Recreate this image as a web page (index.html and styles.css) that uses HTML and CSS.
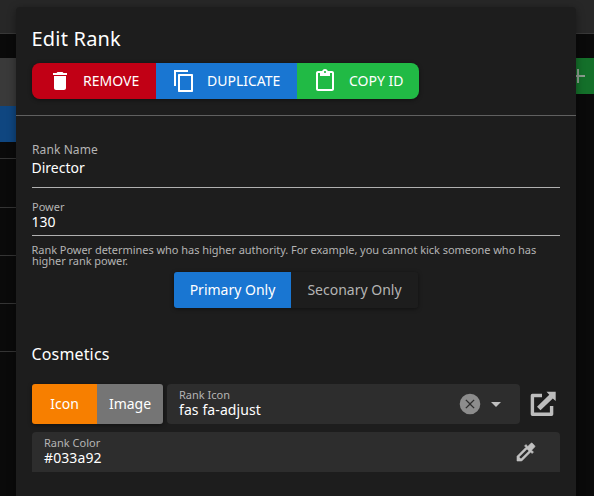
FILE: index.html
```html
<!DOCTYPE html>
<html lang="en">
<head>
<meta charset="utf-8">
<title>Edit Rank</title>
<link rel="stylesheet" href="styles.css">
</head>
<body>
<div class="page">
  <header class="topbar"></header>
  <div class="toolbar">
    <div class="side">
      <div class="side-head"></div>
      <div class="side-active"></div>
      <div class="side-row first"></div>
      <div class="side-row second"></div>
      <div class="side-row"></div>
      <div class="side-row"></div>
      <div class="side-row"></div>
    </div>
    <div class="add"><svg width="24" height="24" viewBox="0 0 24 24"><path d="M19 13h-6v6h-2v-6H5v-2h6V5h2v6h6z"/></svg></div>
  </div>
</div>

<main class="dialog">
  <section class="head">
    <h1>Edit Rank</h1>
    <div class="group actions">
      <button class="btn remove"><svg width="24" height="24" viewBox="0 0 24 24"><path d="M6 19c0 1.100.9 2 2 2h8c1.100 0 2-.9 2-2V7H6v12zM19 4h-3.500l-1-1h-5l-1 1H5v2h14V4z"/></svg><span>REMOVE</span></button>
      <button class="btn duplicate"><svg width="24" height="24" viewBox="0 0 24 24"><path d="M16 1H2v16h2V3h12V1zm3 4H7c-.6 0-1 .4-1 1v16c0 .6.4 1 1 1h13c.6 0 1-.4 1-1V6c0-.6-.4-1-1-1zm0 16H8V7h11v14z"/></svg><span>DUPLICATE</span></button>
      <button class="btn copy"><svg width="24" height="24" viewBox="0 0 24 24"><path d="M19 2h-4.180C14.400.84 13.300 0 12 0S9.600.84 9.180 2H5c-1.100 0-2 .9-2 2v16c0 1.100.9 2 2 2h14c1.100 0 2-.9 2-2V4c0-1.100-.9-2-2-2zm-7 0c.55 0 1 .45 1 1s-.45 1-1 1-1-.45-1-1 .45-1 1-1zm7 18H5V4h2v3h10V4h2v16z"/></svg><span>COPY ID</span></button>
    </div>
  </section>
  <section class="body">
    <div class="field name"><label>Rank Name</label><div class="value">Director</div></div>
    <div class="field power"><label>Power</label><div class="value">130</div></div>
    <p class="hint">Rank Power determines who has higher authority. For example, you cannot kick someone who has higher rank power.</p>
    <div class="group scope">
      <button class="btn primary">Primary Only</button>
      <button class="btn secondary">Seconary Only</button>
    </div>
    <h2>Cosmetics</h2>
    <div class="icon-row">
      <div class="group kind">
        <button class="btn icon-btn">Icon</button>
        <button class="btn image-btn">Image</button>
      </div>
      <div class="box select">
        <div class="text"><label>Rank Icon</label><div class="value">fas fa-adjust</div></div>
        <svg class="clear" width="24" height="24" viewBox="0 0 24 24"><path d="M12 1.700a10.300 10.300 0 1 0 0 20.600 10.300 10.300 0 0 0 0-20.600zm4.600 14L15.700 16.600 12 12.900 8.300 16.600 7.400 15.700 11.100 12 7.400 8.300 8.300 7.400 12 11.100 15.700 7.400 16.600 8.300 12.900 12z"/></svg>
        <svg class="caret" width="24" height="24" viewBox="0 0 24 24"><path d="M7 10l5 5 5-5z"/></svg>
      </div>
      <svg class="open" width="26" height="26" viewBox="0 0 26 26"><path d="M12 4.500H2.400V23.300H21.600V15" fill="none" stroke="#bdbdbd" stroke-width="3.400" stroke-linejoin="round"/><path d="M16.500.8h9.200V10l-2.900-2.500L10.500 19.300 7 15.800 19.300 3.800z" fill="#bdbdbd"/></svg>
    </div>
    <div class="box color">
      <div class="text"><label>Rank Color</label><div class="value">#033a92</div></div>
      <svg class="picker" width="24" height="24" viewBox="0 0 24 24"><path d="M20.710 5.630l-2.340-2.340c-.39-.39-1.020-.39-1.410 0l-3.120 3.120-1.930-1.910-1.410 1.410 1.420 1.420L3 16.250V21h4.750l8.920-8.920 1.420 1.420 1.410-1.410-1.920-1.920 3.120-3.120c.4-.4.4-1.030.01-1.420zM6.920 19L5 17.080l8.060-8.060 1.920 1.920L6.920 19z"/></svg>
    </div>
  </section>
</main>
</body>
</html>
```
FILE: styles.css
```css
* { box-sizing: border-box; }
body {
  margin: 0;
  height: 496px;
  overflow: hidden;
  background: #0a0a0a;
  color: #fff;
  font: 14px/20px "Noto Sans", sans-serif;
}
h1, h2, p { margin: 0; font-weight: 400; }
h1, h2, .field .value, .hint { text-indent: -.5px; }
svg { display: block; flex: none; fill: currentColor; }
label { display: block; color: #b4b4b4; }

.page { height: 496px; }
.topbar { height: 34px; background: #272727; border-bottom: 1px solid #383838; }
.toolbar { display: flex; justify-content: space-between; padding-top: 24px; }
.side { width: 16px; }
.side-head { height: 48px; background: #3a3a3a; }
.side-active { height: 36px; background: #0f4680; }
.side-row { height: 48px; border-bottom: 1px solid #343434; }
.side-row.first { height: 17px; }
.side-row.second { height: 49px; }
.add {
  display: flex;
  align-items: center;
  width: 30px;
  height: 36px;
  background: #14702a;
  color: #8c9c8f;
}
.add svg { margin-left: 2px; }

.dialog {
  position: absolute;
  top: 7px;
  left: 16px;
  width: 560px;
  height: 510px;
  background: #1d1d1d;
  border-radius: 4px 4px 0 0;
  box-shadow: 0 2px 8px rgba(0, 0, 0, .4);
}
.head { height: 109px; padding: 16px; border-bottom: 1px solid #606060; }
h1 { font-size: 20px; line-height: 32px; letter-spacing: .2px; }
.group { display: flex; width: max-content; border-radius: 3px; box-shadow: 0 1px 4px rgba(0, 0, 0, .45); overflow: hidden; }
.actions { margin-top: 8px; border-radius: 8px; }
.btn {
  display: flex;
  align-items: center;
  justify-content: center;
  height: 36px;
  padding: 0;
  border: 0;
  color: #fff;
  font: 14px/24px "Noto Sans", sans-serif;
}
.actions .btn { justify-content: flex-start; padding-left: 15.5px; }
.actions span { margin-left: 11.500px; }
.remove { width: 124px; background: #c10015; }
.duplicate { width: 141px; background: #1976d2; }
.copy { width: 122px; background: #21ba45; }
.actions .copy { padding-left: 16px; }
.copy span { margin-left: 12px; }

.body { padding: 16px; }
.field { border-bottom: 1px solid #b0b0b0; }
.name { height: 56px; padding-top: 8px; }
.name label { font-size: 12px; line-height: 20px; letter-spacing: .1px; }
.name .value { line-height: 16px; }
.power { height: 48px; padding-top: 11px; }
.power label { font-size: 11px; line-height: 16px; }
.power .value { line-height: 13px; }
.box label { font-size: 11px; line-height: 15px; }
.hint { padding-top: 8px; height: 36px; color: #b4b4b4; font-size: 11px; line-height: 11px; letter-spacing: -.04px; }
.scope { margin: 0 auto; }
.primary { width: 117px; background: #1976d2; }
.secondary { width: 127px; background: #1d1d1d; color: #b4b4b4; }
h2 { margin-top: 34px; font-size: 16px; line-height: 24px; letter-spacing: .15px; }
.icon-row { display: flex; align-items: center; margin-top: 18px; }
.kind .btn { height: 40px; }
.icon-btn { width: 65px; background: #f77f00; }
.image-btn { width: 66px; background: #757575; }
.box { display: flex; align-items: center; height: 40px; padding: 0 12px; background: #2d2d2d; border-radius: 4px; }
.text { flex: 1; padding-bottom: 4px; }
.box .value { line-height: 15px; letter-spacing: .1px; }
.select { width: 353px; margin-left: 4px; }
.clear { color: #8c8c8c; }
.caret { margin-left: 2px; color: #c0c0c0; }
.open { margin-left: 10px; }
.color { margin-top: 8px; border-radius: 4px 4px 0 0; }
.picker { margin-right: 10px; color: #c0c0c0; stroke: currentColor; stroke-width: .6; }
```
